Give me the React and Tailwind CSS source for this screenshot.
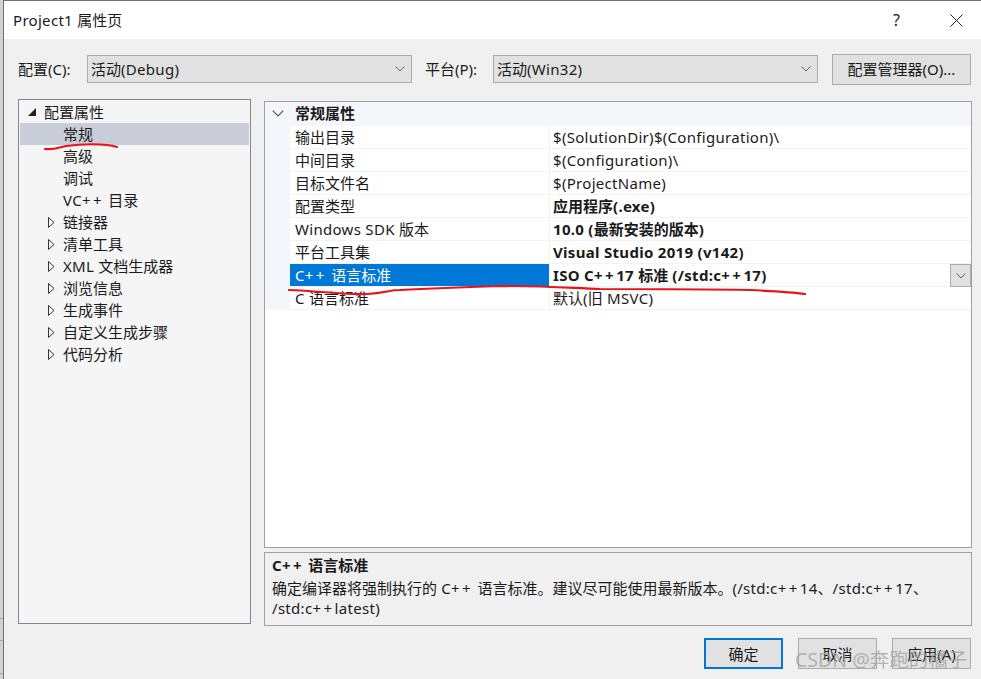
const FONT = "font-['Noto_Sans','Noto_Sans_CJK_SC',sans-serif]";

const tree = [
  { label: "常规", selected: true },
  { label: "高级" },
  { label: "调试" },
  { label: "VC++ 目录" },
  { label: "链接器", arrow: true },
  { label: "清单工具", arrow: true },
  { label: "XML 文档生成器", arrow: true },
  { label: "浏览信息", arrow: true },
  { label: "生成事件", arrow: true },
  { label: "自定义生成步骤", arrow: true },
  { label: "代码分析", arrow: true },
];

const props = [
  { name: "输出目录", value: "$(SolutionDir)$(Configuration)\\" },
  { name: "中间目录", value: "$(Configuration)\\" },
  { name: "目标文件名", value: "$(ProjectName)" },
  { name: "配置类型", value: "应用程序(.exe)", bold: true },
  { name: "Windows SDK 版本", value: "10.0 (最新安装的版本)", bold: true },
  { name: "平台工具集", value: "Visual Studio 2019 (v142)", bold: true },
  { name: "C++ 语言标准", value: "ISO C++17 标准 (/std:c++17)", bold: true, selected: true },
  { name: "C 语言标准", value: "默认(旧 MSVC)" },
];

// Latin runs sit a bit wider in the shot than in Noto Sans, and "++" much wider
const Txt = ({ children }) =>
  children.split(/(\+\+|[\x20-\x2a\x2c-\x7e]+)/).map((part, i) => {
    if (part === "++") return <span key={i} className="tracking-[2.5px]">{part}</span>;
    if (/^[\x20-\x7e]+$/.test(part)) return <span key={i} className="tracking-[0.3px]">{part}</span>;
    return part;
  });

const Chevron = ({ className }) => (
  <svg viewBox="0 0 10 6" className={className} fill="none" stroke="currentColor" strokeWidth="1">
    <path d="M0.5 0.5 L5 5 L9.5 0.5" />
  </svg>
);

const Select = ({ label, width }) => (
  <div className={`flex h-[28px] items-center justify-between border border-[#acacac] bg-[#e1e1e1] pl-[3px] pr-[6px] ${width}`}>
    <span><Txt>{label}</Txt></span>
    <Chevron className="h-[6px] w-[10px] text-[#606060]" />
  </div>
);

const Button = ({ children, className }) => (
  <div className={`flex items-center justify-center border bg-[#e1e1e1] ${className}`}>{children}</div>
);

export default function App() {
  return (
    <div className={`${FONT} relative h-[679px] w-[981px] overflow-hidden bg-[#d2d2d2] pl-[3px] text-[15px] leading-[22px] text-[#1a1a1a]`}>
      <div className="flex h-full flex-col border-l border-t border-[#6f6f6f] bg-[#f0f0f0]">
        {/* title bar */}
        <div className="flex h-[38px] shrink-0 items-center justify-between bg-white pl-[9px] pr-[18px]">
          <span><Txt>Project1 属性页</Txt></span>
          <div className="flex items-center gap-[50px]">
            <span className="text-[16px]">?</span>
            <svg viewBox="0 0 13 13" className="h-[13px] w-[13px]" fill="none" stroke="#222" strokeWidth="1">
              <path d="M0.5 0.5 L12.5 12.5 M12.5 0.5 L0.5 12.5" />
            </svg>
          </div>
        </div>

        {/* config row */}
        <div className="mt-[14px] flex h-[32px] shrink-0 items-center pl-[14px]">
          <span className="w-[69px]">配置(C):</span>
          <Select label="活动(Debug)" width="w-[325px]" />
          <span className="ml-[13px] w-[68px]">平台(P):</span>
          <Select label="活动(Win32)" width="w-[325px]" />
          <Button className="ml-[14px] h-[31px] w-[139px] border-[#acacac]">配置管理器(O)...</Button>
        </div>

        <div className="mt-[14px] flex min-h-0 shrink-0 pl-[14px]">
          {/* tree */}
          <div className="h-[525px] w-[233px] shrink-0 border border-[#828790] bg-[#f5f5f5] px-[1px]">
            <div className="flex h-[23px] items-center">
              <svg viewBox="0 0 8 8" className="ml-[8px] h-[8px] w-[8px]"><path d="M8 0 V8 H0 Z" fill="#222" /></svg>
              <span className="ml-[8px]">配置属性</span>
            </div>
            {tree.map((item) => (
              <div key={item.label} className={`relative flex h-[22px] items-center pl-[43px] ${item.selected ? "bg-[#c9ccd9]" : ""}`}>
                {item.arrow && (
                  <svg viewBox="0 0 7 11" className="absolute left-[28px] top-[6px] h-[11px] w-[7px]" fill="none" stroke="#333">
                    <path d="M0.5 0.5 L6 5.5 L0.5 10.5 Z" />
                  </svg>
                )}
                <span><Txt>{item.label}</Txt></span>
              </div>
            ))}
          </div>

          <div className="ml-[13px] mt-[2px] flex w-[708px] flex-col">
            {/* property grid */}
            <div className="h-[447px] border border-[#a0a0a0] bg-white">
              <div className="flex h-[24px] items-center bg-[#f3f6fb] pb-[2px]">
                <Chevron className="ml-[7px] mt-[1px] h-[7px] w-[12px] text-[#555]" />
                <span className="ml-[11px] font-bold">常规属性</span>
              </div>
              <div className="flex">
                <div className="w-[25px] shrink-0 bg-[#f3f6fb]" />
                <div className="flex-1">
                  {props.map((p) => (
                    <div key={p.name} className="flex h-[23px] border-b border-[#f0f3f8]">
                      <div className={`flex w-[260px] items-center border-r border-[#f0f3f8] pl-[5px] ${p.selected ? "bg-[#0078d7] text-white" : ""}`}>
                        <span><Txt>{p.name}</Txt></span>
                      </div>
                      <div className={`relative flex flex-1 items-center pl-[3px] ${p.bold ? "font-bold" : ""}`}>
                        <span><Txt>{p.value}</Txt></span>
                        {p.selected && (
                          <div className="absolute right-0 top-0 flex h-[23px] w-[21px] items-center justify-center border border-[#acacac] bg-[#e1e1e1]">
                            <Chevron className="h-[6px] w-[10px] text-[#606060]" />
                          </div>
                        )}
                      </div>
                    </div>
                  ))}
                </div>
              </div>
            </div>

            {/* description */}
            <div className="mt-[4px] h-[74px] border border-[#a0a0a0] px-[7px] pt-[2px] leading-[20px]">
              <div className="font-bold"><Txt>C++ 语言标准</Txt></div>
              <div className="mt-[3px]">
                <Txt>确定编译器将强制执行的 C++ 语言标准。建议尽可能使用最新版本。(/std:c++14、/std:c++17、</Txt>
                <br />
                <Txt>/std:c++latest)</Txt>
              </div>
            </div>
          </div>
        </div>

        {/* footer buttons */}
        <div className="mt-[12px] flex justify-end gap-[15px] pr-[10px]">
          <Button className="h-[31px] w-[79px] border-2 border-[#0078d7]">确定</Button>
          <Button className="h-[31px] w-[79px] border-[#acacac]">取消</Button>
          <Button className="h-[31px] w-[79px] border-[#acacac]">应用(A)</Button>
        </div>
      </div>

      {/* bits of the window behind, along the left edge */}
      <div className="absolute left-0 top-[618px] h-px w-[3px] bg-[#a8a8a8]" />
      <div className="absolute left-0 top-[640px] h-px w-[3px] bg-[#a8a8a8]" />
      <div className="absolute left-0 top-[673px] h-px w-[3px] bg-[#a8a8a8]" />

      {/* red pen marks over the shot */}
      <svg viewBox="0 0 981 679" className="pointer-events-none absolute left-0 top-0 h-[679px] w-[981px]" fill="none" stroke="#e8141c" strokeWidth="2.2" strokeLinecap="round">
        <path d="M45 149 C55 150 60 147 66 146 C80 144 105 143 117 147" />
        <path d="M289 290 C320 291 345 295 367 294 C385 293 390 290 400 290 C440 288 470 287 500 286 C550 286 570 288 600 289 C650 289 700 289 750 290 C770 291 790 292 805 294" />
      </svg>

      {/* watermark */}
      <div className="pointer-events-none absolute left-[795px] top-[646px] text-[19.5px] leading-[28px] text-[#a0a0a0]/75">CSDN @奔跑的橘子</div>
    </div>
  );
}
